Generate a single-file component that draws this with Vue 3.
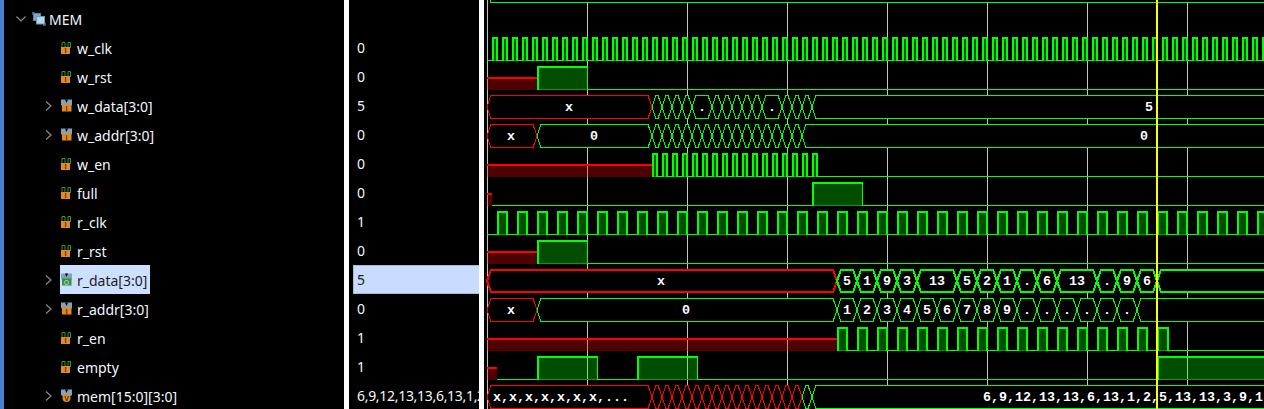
<script setup>
const signals = [
  { name: "w_clk", value: "0", icon: "bit" },
  { name: "w_rst", value: "0", icon: "bit" },
  { name: "w_data[3:0]", value: "5", icon: "bus", open: true },
  { name: "w_addr[3:0]", value: "0", icon: "bus", open: true },
  { name: "w_en", value: "0", icon: "bit" },
  { name: "full", value: "0", icon: "bit" },
  { name: "r_clk", value: "1", icon: "bit" },
  { name: "r_rst", value: "0", icon: "bit" },
  { name: "r_data[3:0]", value: "5", icon: "out", open: true, selected: true },
  { name: "r_addr[3:0]", value: "0", icon: "bus", open: true },
  { name: "r_en", value: "1", icon: "bit" },
  { name: "empty", value: "1", icon: "bit" },
  { name: "mem[15:0][3:0]", value: "6,9,12,13,13,6,13,1,2,5,13,13,3,9,1", icon: "mem", open: true },
];

const END = 1264;
const GREEN = "#00ff00";
const RED = "#ff0000";
const gridLines = [487, 587, 687, 787, 887, 987, 1087, 1187];

const rowCenter = (i) => 49 + 29 * i;
const range = (from, to, step) => {
  const out = [];
  for (let x = from; x < to; x += step) out.push(x);
  return out;
};

const rects = [];
const lines = [];
const hexes = [];
const labels = [];

function low(c, x0, x1) {
  lines.push({ x1: x0, x2: x1, y: c + 11.5, color: GREEN });
}

function high(c, x0, x1) {
  const top = c - 12;
  const narrow = x1 - x0 <= 12;
  rects.push({ x: x0, y: top, w: x1 - x0, h: 24, fill: "rgba(0,255,0,0.3)" });
  rects.push({ x: x0, y: c + 11, w: x1 - x0, h: 1, fill: "#00a000" });
  rects.push({ x: x0, y: top, w: x1 - x0 + 1, h: 2, fill: GREEN });
  rects.push({ x: x0, y: top, w: 2, h: 24, fill: GREEN });
  rects.push({ x: narrow ? x1 - 1 : x1, y: top, w: narrow ? 2 : 1, h: 24, fill: GREEN });
}

function unknown(c, x0, x1) {
  rects.push({ x: x0, y: c - 1, w: x1 - x0, h: 13, fill: "rgba(255,0,0,0.31)" });
  rects.push({ x: x0, y: c - 1, w: x1 - x0, h: 2, fill: RED });
}

function clock(c, from, to, period) {
  const half = period / 2;
  for (const x of range(from, to, period)) {
    high(c, x, x + half);
    low(c, x + half, Math.min(x + period, END));
  }
}

function bus(c, x0, x1, color, thick = 1) {
  const top = c - 11.5;
  const bot = c + 11.5;
  const points = [
    [x0, c], [x0 + 4, top], [x1 - 4, top], [x1, c], [x1 - 4, bot], [x0 + 4, bot],
  ].map((p) => p.join(",")).join(" ");
  const slants = `M${x0 + 4} ${top} L${x0} ${c} L${x0 + 4} ${bot} M${x1 - 4} ${top} L${x1} ${c} L${x1 - 4} ${bot}`;
  hexes.push({ points, slants, color, thick });
  rects.push({ x: x0 + 4, y: top - 0.5, w: x1 - x0 - 8, h: thick, fill: color });
  rects.push({ x: x0 + 4, y: bot + 0.5 - thick, w: x1 - x0 - 8, h: thick, fill: color });
}

function label(c, text, x, anchor = "middle") {
  labels.push({ text, x, y: c + 4, anchor });
}

function busRow(c, edges, values, thick = 1) {
  edges.slice(0, -1).forEach((x0, n) => {
    const x1 = edges[n + 1];
    bus(c, x0, x1, GREEN, thick);
    if (values[n]) label(c, values[n], (x0 + x1) / 2);
  });
}

// the bus of the row above the view, only its lower edge shows
bus(-9, 487, 1500, GREEN);

// w_clk
lines.push({ x1: 487, x2: 492, y: rowCenter(0) + 11.5, color: GREEN });
clock(rowCenter(0), 492, END, 10);

// w_rst
unknown(rowCenter(1), 487, 537);
high(rowCenter(1), 537, 587);
low(rowCenter(1), 587, END);

// w_data
const wDataEdges = [...range(652, 702, 10), ...range(712, 772, 10), ...range(782, 822, 10), 1486];
bus(rowCenter(2), 487, 652, RED);
label(rowCenter(2), "x", 569);
busRow(rowCenter(2), wDataEdges, { 4: ".", 10: ".", 14: "5" });

// w_addr
bus(rowCenter(3), 487, 537, RED);
label(rowCenter(3), "x", 511);
bus(rowCenter(3), 537, 652, GREEN);
label(rowCenter(3), "0", 594);
busRow(rowCenter(3), [...range(652, 812, 10), 1486], { 15: "0" });

// w_en
unknown(rowCenter(4), 487, 652);
clock(rowCenter(4), 652, 812, 10);
high(rowCenter(4), 812, 817);
low(rowCenter(4), 817, END);

// full
unknown(rowCenter(5), 487, 492);
low(rowCenter(5), 492, 812);
high(rowCenter(5), 812, 862);
low(rowCenter(5), 862, END);

// r_clk
low(rowCenter(6), 487, 497);
clock(rowCenter(6), 497, END, 20);

// r_rst
unknown(rowCenter(7), 487, 537);
high(rowCenter(7), 537, 587);
low(rowCenter(7), 587, END);

// r_data is the selected row and has heavier lines
bus(rowCenter(8), 487, 837, RED, 2);
label(rowCenter(8), "x", 661);
busRow(
  rowCenter(8),
  [837, 857, 877, 897, 917, 957, 977, 997, 1017, 1037, 1057, 1097, 1117, 1137, 1157, 1500],
  ["5", "1", "9", "3", "13", "5", "2", "1", ".", "6", "13", ".", "9", "6"],
  2,
);

// r_addr
bus(rowCenter(9), 487, 537, RED);
label(rowCenter(9), "x", 511);
bus(rowCenter(9), 537, 837, GREEN);
label(rowCenter(9), "0", 686);
busRow(
  rowCenter(9),
  [...range(837, 1137, 20), 1137, 1500],
  ["1", "2", "3", "4", "5", "6", "7", "8", "9", ".", ".", ".", ".", ".", "."],
);

// r_en
unknown(rowCenter(10), 487, 837);
clock(rowCenter(10), 837, 1157, 20);
high(rowCenter(10), 1157, 1168);
low(rowCenter(10), 1168, END);

// empty
unknown(rowCenter(11), 487, 497);
low(rowCenter(11), 497, 537);
high(rowCenter(11), 537, 597);
low(rowCenter(11), 597, 637);
high(rowCenter(11), 637, 697);
low(rowCenter(11), 697, 1157);
high(rowCenter(11), 1157, 1300);

// mem
bus(rowCenter(12), 487, 652, RED);
label(rowCenter(12), "x,x,x,x,x,x,x,...", 493, "start");
range(652, 802, 10).forEach((x) => bus(rowCenter(12), x, x + 10, RED));
bus(rowCenter(12), 802, 812, GREEN);
bus(rowCenter(12), 812, 1600, GREEN);
label(rowCenter(12), "6,9,12,13,13,6,13,1,2,5,13,13,3,9,1", 983, "start");
</script>

<template>
  <div class="viewer">
    <div class="edge"></div>

    <div class="names">
      <div class="row group">
        <svg class="chevron" width="10" height="6" viewBox="0 0 10 6">
          <path d="M0.5 0.5 L5 5 L9.5 0.5" />
        </svg>
        <svg class="icon" width="14" height="14" viewBox="0 0 14 14">
          <rect x="0" y="0" width="3" height="3" fill="#4a5560" />
          <rect x="11" y="11" width="3" height="3" fill="#4a5560" />
          <rect x="1.5" y="1.5" width="7" height="7" fill="#7fa8c4" stroke="#5d8098" />
          <rect x="4.5" y="4.5" width="8" height="7.5" fill="#b4d6ee" stroke="#6f97b2" />
        </svg>
        <span class="label group-label">MEM</span>
      </div>

      <div v-for="s in signals" :key="s.name" class="row">
        <span class="arrow">
          <svg v-if="s.open" class="chevron" width="7" height="10" viewBox="0 0 7 10">
            <path d="M1 0.5 L6 5 L1 9.5" />
          </svg>
        </span>
        <span class="name" :class="{ selected: s.selected }">
          <svg class="icon" width="13" height="14" viewBox="0 0 13 14">
            <template v-if="s.icon === 'bit'">
              <path d="M2 7 V1.5 H5 V7 M8 7 V1.5 H10.5 V7" fill="none" stroke="#2f9a3c" stroke-width="1" />
              <rect x="1" y="6" width="9" height="7" fill="#e58a22" />
              <text x="5.5" y="12" class="pin dark">I</text>
            </template>
            <template v-else>
              <path d="M1 0.5 H12 V6 L9 8 H4 L1 6 Z" fill="#7fa4bc" />
              <path d="M5 0.5 L6.5 4 L8 0.5 Z" fill="#000" />
              <circle v-if="s.icon === 'mem'" cx="6.5" cy="9" r="4" fill="#e58a22" />
              <rect v-else x="2" y="5.5" width="9.5" height="7" :fill="s.icon === 'out' ? '#3a8f44' : '#e58a22'" />
              <text x="6.6" y="11.8" class="pin" :class="s.icon === 'out' ? 'pale' : 'dark'">
                {{ s.icon === "out" ? "O" : s.icon === "mem" ? "V" : "I" }}
              </text>
            </template>
          </svg>
          <span class="label">{{ s.name }}</span>
        </span>
      </div>
    </div>

    <div class="values">
      <div v-for="s in signals" :key="s.name" class="value" :class="{ selected: s.selected }">
        {{ s.value }}
      </div>
    </div>

    <div class="waves">
      <svg width="780" height="409" viewBox="484 0 780 409">
        <g shape-rendering="crispEdges">
          <line
            v-for="x in gridLines"
            :key="x"
            :x1="x + 0.5"
            :x2="x + 0.5"
            y1="0"
            y2="409"
            stroke="#c4c4c4"
          />
          <template v-for="(h, i) in hexes" :key="i">
            <polygon :points="h.points" fill="#000" />
            <path :d="h.slants" fill="none" :stroke="h.color" :stroke-width="h.thick" />
          </template>
          <rect
            v-for="(r, i) in rects"
            :key="i"
            :x="r.x"
            :y="r.y"
            :width="r.w"
            :height="r.h"
            :fill="r.fill"
          />
          <line
            v-for="(l, i) in lines"
            :key="i"
            :x1="l.x1"
            :x2="l.x2"
            :y1="l.y"
            :y2="l.y"
            :stroke="l.color"
          />
        </g>
        <text
          v-for="(t, i) in labels"
          :key="i"
          :x="t.x"
          :y="t.y"
          :text-anchor="t.anchor"
          class="wave-text"
        >{{ t.text }}</text>
        <rect x="1156" y="0" width="2" height="409" fill="#ffff00" />
      </svg>
    </div>
  </div>
</template>

<style>
html,
body {
  margin: 0;
  background: #000;
  overflow: hidden;
}
</style>

<style scoped>
.viewer {
  display: flex;
  width: 1264px;
  height: 409px;
  overflow: hidden;
  background: #000;
  font-family: "Noto Sans", "Open Sans", sans-serif;
  font-size: 14px;
  color: #f2f7ff;
}

.edge {
  flex: 0 0 4px;
  background: #4a7ecf;
}

.names {
  flex: 0 0 340px;
  padding-top: 4px;
  border-right: 5px solid #fff;
  box-sizing: content-box;
}

.row {
  display: flex;
  align-items: center;
  height: 29px;
  padding-left: 41px;
}

.row.group {
  padding-left: 12px;
  gap: 6px;
}

.label {
  padding-top: 1px;
}

.group-label {
  margin-left: -3px;
}

.arrow {
  flex: 0 0 15px;
  display: flex;
  align-items: center;
}

.chevron path {
  fill: none;
  stroke: #8a8a8a;
  stroke-width: 1.2;
}

.name {
  display: flex;
  align-items: center;
  height: 29px;
  padding-right: 3px;
  gap: 4px;
}

.name.selected {
  background: #cce0ff;
  color: #1c1c1c;
}

.icon {
  flex: none;
}

.pin {
  font-family: "Liberation Sans", sans-serif;
  font-size: 7px;
  font-weight: 700;
  text-anchor: middle;
}

.dark {
  fill: #4a2c08;
}

.pale {
  fill: #9cd89c;
}

.values {
  flex: 0 0 130px;
  padding-top: 33px;
  min-width: 0;
}

.value {
  height: 29px;
  line-height: 29px;
  padding-left: 4px;
  margin-left: 4px;
  white-space: nowrap;
  overflow: hidden;
  letter-spacing: -0.3px;
}

.value.selected {
  box-sizing: border-box;
  line-height: 27px;
  padding-left: 3px;
  background: #c8dcff;
  border: 1px solid #a4bcd8;
  border-right: none;
  color: #1c1c1c;
}

.waves {
  flex: 0 0 785px;
  border-left: 5px solid #fff;
  box-sizing: border-box;
  overflow: hidden;
}

.waves svg {
  display: block;
}

.wave-text {
  font-family: "Liberation Mono", monospace;
  font-size: 13.33px;
  font-weight: 700;
  fill: #fff;
}
</style>
